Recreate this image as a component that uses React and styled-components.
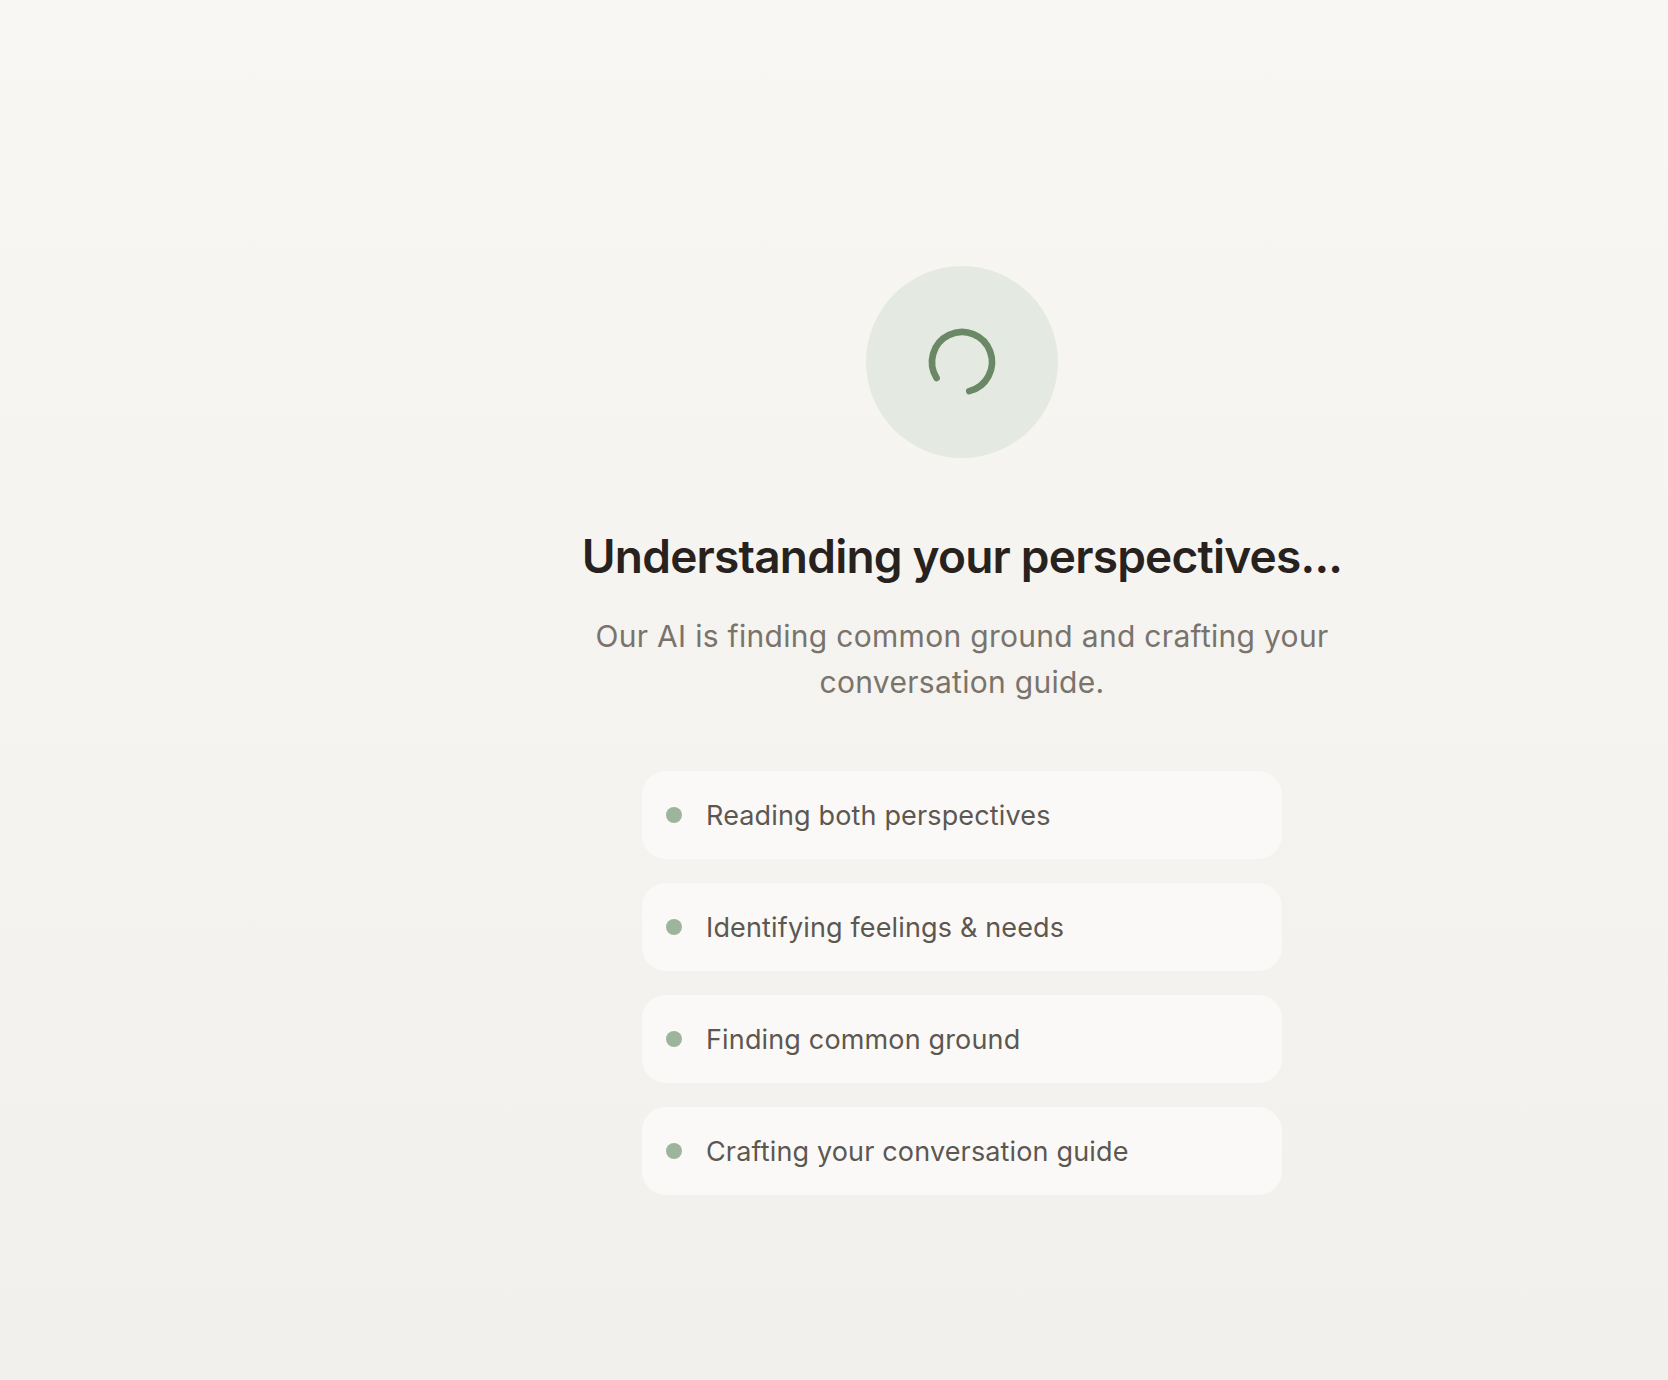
import styled, { createGlobalStyle } from 'styled-components';
import { Loader2 } from 'lucide-react';

const GlobalStyle = createGlobalStyle`
    *{ box-sizing:border-box; }
    html, body{ margin:0; padding:0; }
    body{
        font-family:Inter, "Noto Sans", sans-serif;
        background:linear-gradient(180deg, #f8f7f4 0%, #f4f3ef 55%, #f1f0ec 100%);
        min-height:100vh;
    }
`

const Page = styled.div`
    display:grid;
    grid-template-columns:256px 1fr;
    min-height:100vh;
`
const Side = styled.aside``

const Main = styled.main`
    display:flex;
    flex-direction:column;
    align-items:center;
    padding-top:266px;
`
const SpinnerWrap = styled.div`
    width:192px;
    height:192px;
    border-radius:50%;
    background:#e4e9e2;
    display:flex;
    align-items:center;
    justify-content:center;
    color:#6a8865;
    svg{ transform:rotate(148deg); }
`
const Title = styled.h1`
    margin:71px 0 0;
    font-size:46px;
    line-height:1.2;
    font-weight:600;
    letter-spacing:-0.017em;
    color:#28221e;
    text-align:center;
`
const Subtitle = styled.p`
    margin:29px 0 0;
    max-width:760px;
    font-size:30px;
    line-height:46px;
    color:#7a736c;
    text-align:center;
    letter-spacing:0.01em;
`
const StepList = styled.ul`
    list-style:none;
    margin:66px 0 0;
    padding:0;
    width:640px;
    display:flex;
    flex-direction:column;
    gap:24px;
`
const StepItem = styled.li`
    height:88px;
    padding:0 24px;
    display:flex;
    align-items:center;
    gap:24px;
    background:#faf9f7;
    border-radius:24px;
    font-size:27px;
    color:#5d5751;
    letter-spacing:0.15px;
`
const Dot = styled.span`
    width:16px;
    height:16px;
    border-radius:50%;
    flex:none;
    background:${props => props.color || '#9db59a'};
`

const steps = [
    'Reading both perspectives',
    'Identifying feelings & needs',
    'Finding common ground',
    'Crafting your conversation guide',
]

export default function App(){
    return(
        <>
            <GlobalStyle />
            <Page>
                <Side />
                <Main>
                    <SpinnerWrap>
                        <Loader2 size={80} strokeWidth={2} />
                    </SpinnerWrap>
                    <Title>Understanding your perspectives...</Title>
                    <Subtitle>Our AI is finding common ground and crafting your conversation guide.</Subtitle>
                    <StepList>
                        {steps.map(s => (
                            <StepItem key={s}>
                                <Dot />
                                {s}
                            </StepItem>
                        ))}
                    </StepList>
                </Main>
            </Page>
        </>
    )
}
